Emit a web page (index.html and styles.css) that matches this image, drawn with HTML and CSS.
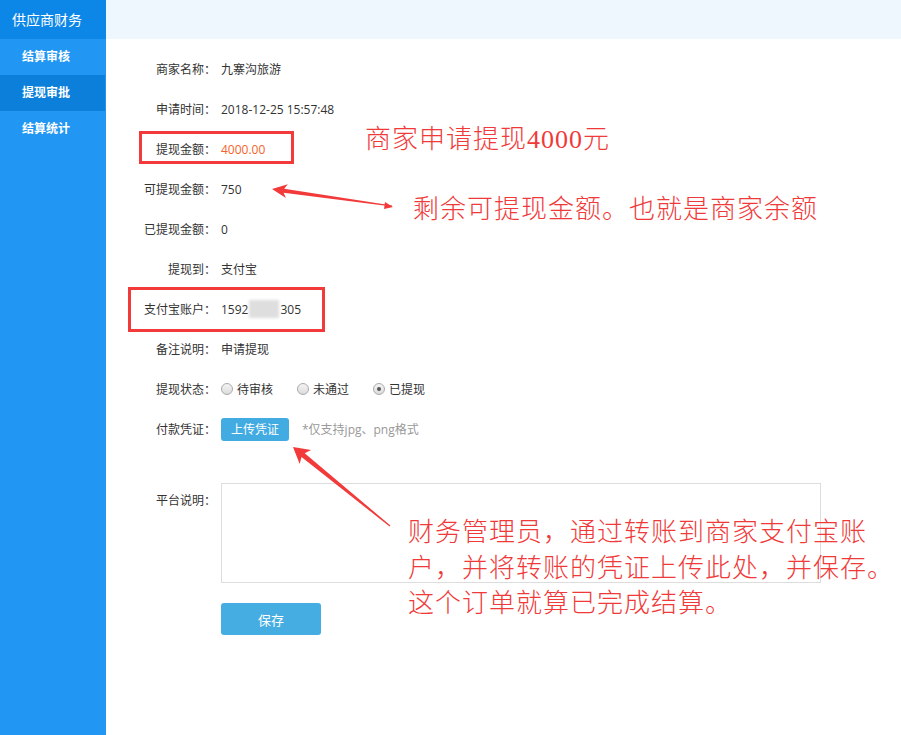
FILE: index.html
```html
<!DOCTYPE html>
<html lang="zh-CN">
<head>
  <meta charset="UTF-8" />
  <title>提现审批</title>
  <link rel="stylesheet" href="styles.css">
</head>
<body>
  <div class="layout">
    <div class="sidebar">
      <div class="side-title">供应商财务</div>
      <div class="menu-item">结算审核</div>
      <div class="menu-item active">提现审批</div>
      <div class="menu-item">结算统计</div>
    </div>

    <div class="main">
      <div class="topbar"></div>

      <div class="form">
        <div class="row"><span class="label">商家名称：</span><span class="val">九寨沟旅游</span></div>
        <div class="row"><span class="label">申请时间：</span><span class="val">2018-12-25 15:57:48</span></div>
        <div class="row"><span class="label">提现金额：</span><span class="val money">4000.00</span></div>
        <div class="row"><span class="label">可提现金额：</span><span class="val">750</span></div>
        <div class="row"><span class="label">已提现金额：</span><span class="val">0</span></div>
        <div class="row"><span class="label">提现到：</span><span class="val">支付宝</span></div>
        <div class="row"><span class="label">支付宝账户：</span><span class="val">1592<span class="blur"></span>305</span></div>
        <div class="row"><span class="label">备注说明：</span><span class="val">申请提现</span></div>
        <div class="row">
          <span class="label">提现状态：</span>
          <span class="val radios">
            <span class="radio"><i></i>待审核</span>
            <span class="radio"><i></i>未通过</span>
            <span class="radio checked"><i></i>已提现</span>
          </span>
        </div>
        <div class="row">
          <span class="label">付款凭证：</span>
          <span class="val">
            <button class="upload-btn">上传凭证</button>
            <span class="hint">*仅支持jpg、png格式</span>
          </span>
        </div>
        <div class="row row-area">
          <span class="label">平台说明：</span>
          <textarea class="val note"></textarea>
        </div>
        <div class="row-btn">
          <button class="save-btn">保存</button>
        </div>
      </div>
    </div>
  </div>

  <!-- 标注 -->
  <div class="marks">
    <div class="box box1"></div>
    <div class="box box2"></div>
    <div class="tip tip1">商家申请提现4000元</div>
    <div class="tip tip2">剩余可提现金额。也就是商家余额</div>
    <div class="tip tip3">财务管理员，通过转账到商家支付宝账<br>户，并将转账的凭证上传此处，并保存。<br>这个订单就算已完成结算。</div>
    <svg class="arrows" width="901" height="735" viewBox="0 0 901 735">
      <polygon points="392.1,205.4 284.2,188.7 287.8,184.2 272,189 285.9,198 283.6,192.7 391.9,206.6" />
      <polygon points="385,202 393,207 384,209" />
      <polygon points="390.4,525.5 304.7,453.3 311.1,450.1 293,447 299.7,464.1 301.5,457.1 389.6,526.5" />
    </svg>
  </div>
</body>
</html>
```

FILE: styles.css
```css
body {
  margin: 0;
  font-family: "Open Sans", "Noto Sans CJK SC", sans-serif;
  font-size: 12px;
  color: #333;
  background: #fff;
}
.layout {
  display: flex;
  min-height: 735px;
}
.sidebar {
  width: 106px;
  background: #2196f2;
  color: #fff;
}
.side-title {
  height: 39px;
  line-height: 39px;
  padding-left: 12px;
  font-size: 14px;
  background: #0d87e7;
}
.menu-item {
  height: 36px;
  line-height: 36px;
  padding-left: 22px;
  font-weight: bold;
}
.menu-item.active {
  background: #0b7fda;
  margin-right: 1px;
}
.main {
  flex: 1;
}
.topbar {
  height: 39px;
  background: #eff7fe;
}
.form {
  padding-top: 10px;
}
.row {
  display: flex;
  align-items: center;
  height: 40px;
}
.label {
  width: 110px;
  text-align: right;
}
.val {
  margin-left: 5px;
  display: flex;
  align-items: center;
}
.money {
  color: #f4622a;
}
.blur {
  display: inline-block;
  width: 30px;
  height: 18px;
  background: #dedede;
  filter: blur(1.5px);
  margin: 0 1px;
}
.radio {
  display: inline-flex;
  align-items: center;
  margin-right: 24px;
}
.radio i {
  display: inline-block;
  box-sizing: border-box;
  width: 12px;
  height: 12px;
  border: 1px solid #aaa;
  border-radius: 50%;
  background: linear-gradient(#f4f4f4, #dcdcdc);
  margin-right: 4px;
  position: relative;
}
.radio.checked i::after {
  content: "";
  position: absolute;
  left: 3px;
  top: 3px;
  width: 4px;
  height: 4px;
  border-radius: 50%;
  background: #555;
}
.upload-btn {
  width: 68px;
  height: 23px;
  border: none;
  border-radius: 3px;
  background: #42abe1;
  color: #fff;
  font-family: inherit;
  font-size: 12px;
  padding: 0;
}
.hint {
  margin-left: 13px;
  color: #999;
}
.row-area {
  height: auto;
  align-items: flex-start;
  margin-top: 34px;
}
.row-area .label {
  padding-top: 8px;
}
.note {
  width: 600px;
  height: 100px;
  box-sizing: border-box;
  border: 1px solid #ddd;
  resize: none;
  outline: none;
}
.row-btn {
  padding-left: 115px;
  margin-top: 20px;
}
.save-btn {
  width: 100px;
  height: 32px;
  border: none;
  border-radius: 3px;
  background: #45ade2;
  color: #fff;
  font-family: inherit;
  font-size: 13px;
}

.marks {
  position: absolute;
  left: 0;
  top: 0;
  width: 901px;
  height: 735px;
  pointer-events: none;
}
.box {
  position: absolute;
  border: 3px solid #f23a3a;
  box-sizing: border-box;
}
.box1 {
  left: 139px;
  top: 131px;
  width: 155px;
  height: 33px;
}
.box2 {
  left: 128px;
  top: 287px;
  width: 197px;
  height: 45px;
}
.tip {
  position: absolute;
  color: #f03a3a;
  font-family: "Liberation Serif", "Noto Sans CJK SC", serif;
  font-size: 26px;
  font-weight: 300;
  line-height: 35.5px;
  white-space: nowrap;
}
.tip1 {
  left: 365px;
  top: 122px;
  letter-spacing: 1px;
}
.tip2 {
  left: 413px;
  top: 192px;
  letter-spacing: 1px;
}
.tip3 {
  left: 408px;
  top: 515px;
  letter-spacing: 1px;
}
.arrows {
  position: absolute;
  left: 0;
  top: 0;
  fill: #f23a3a;
}
```
